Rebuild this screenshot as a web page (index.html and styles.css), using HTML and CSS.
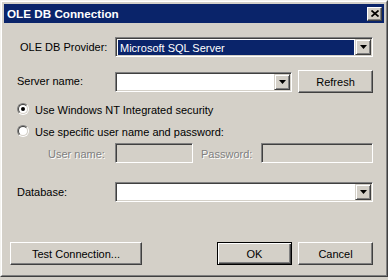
FILE: index.html
```html
<!doctype html>
<html lang="en">

<head>
    <meta charset="utf-8">
    <title>OLE DB Connection</title>
    <link rel="stylesheet" href="styles.css">
</head>

<body>
    <div class="window">
        <div class="frame">
            <div class="titlebar">
                <span class="title">OLE DB Connection</span>
                <button type="button" class="close-btn" aria-label="Close">
                    <svg width="8" height="7" viewBox="0 0 8 7"><path d="M0.5 0.5 L7.5 6.5 M7.5 0.5 L0.5 6.5" stroke="#000" stroke-width="1.7" fill="none"/></svg>
                </button>
            </div>

            <div class="content">
                <div class="row row-provider">
                    <span class="label label-provider">OLE DB Provider:</span>
                    <div class="combo combo-full">
                        <span class="combo-value selected">Microsoft SQL Server</span>
                        <span class="drop-btn"><svg width="7" height="4" viewBox="0 0 7 4"><polygon points="0,0 7,0 3.5,4" fill="#000"/></svg></span>
                    </div>
                </div>

                <div class="row row-server">
                    <span class="label">Server name:</span>
                    <div class="combo combo-server">
                        <span class="combo-value"></span>
                        <span class="drop-btn"><svg width="7" height="4" viewBox="0 0 7 4"><polygon points="0,0 7,0 3.5,4" fill="#000"/></svg></span>
                    </div>
                    <button type="button" class="btn btn-refresh">Refresh</button>
                </div>

                <div class="row row-radio row-radio-first">
                    <span class="radio"><span class="radio-inner checked"></span></span>
                    <span class="radio-text">Use Windows NT Integrated security</span>
                </div>

                <div class="row row-radio row-radio-second">
                    <span class="radio"><span class="radio-inner"></span></span>
                    <span class="radio-text">Use specific user name and password:</span>
                </div>

                <div class="row row-user">
                    <span class="label label-user disabled">User name:</span>
                    <div class="edit edit-user"></div>
                    <span class="label-password disabled">Password:</span>
                    <div class="edit edit-password"></div>
                </div>

                <div class="row row-database">
                    <span class="label">Database:</span>
                    <div class="combo combo-full">
                        <span class="combo-value"></span>
                        <span class="drop-btn"><svg width="7" height="4" viewBox="0 0 7 4"><polygon points="0,0 7,0 3.5,4" fill="#000"/></svg></span>
                    </div>
                </div>

                <div class="row row-buttons">
                    <button type="button" class="btn btn-test">Test Connection...</button>
                    <button type="button" class="btn btn-default btn-ok">OK</button>
                    <button type="button" class="btn btn-cancel">Cancel</button>
                </div>
            </div>
        </div>
    </div>
</body>

</html>
```

FILE: styles.css
```css
/* Classic Windows dialog look */
html, body {
    margin: 0;
    padding: 0;
}

body {
    background: #d4d0c8;
    font-family: "Liberation Sans", Arial, sans-serif;
    font-size: 11px;
    color: #000000;
}

.window {
    width: 388px;
    height: 277px;
    box-sizing: border-box;
    border: 1px solid;
    border-color: #f4f3ef #404040 #404040 #f4f3ef;
    background: #d4d0c8;
}

.frame {
    height: 100%;
    box-sizing: border-box;
    border: 1px solid;
    border-color: #ffffff #808080 #808080 #ffffff;
    padding: 2px;
    display: flex;
    flex-direction: column;
}

.titlebar {
    height: 19px;
    flex: none;
    background: #0a246a;
    display: flex;
    align-items: center;
    justify-content: space-between;
    padding-left: 3px;
}

.title {
    color: #ffffff;
    font-weight: bold;
    font-size: 11.7px;
}

.close-btn {
    width: 15px;
    height: 14px;
    margin-right: 2px;
    padding: 0;
    box-sizing: border-box;
    background: #d4d0c8;
    border: 1px solid;
    border-color: #ffffff #404040 #404040 #ffffff;
    box-shadow: inset -1px -1px #808080;
    display: flex;
    align-items: center;
    justify-content: center;
}

.content {
    flex: 1;
    padding: 0 11px 0 6px;
    display: flex;
    flex-direction: column;
}

.row {
    display: flex;
    align-items: center;
    flex: none;
}

.row-provider { margin-top: 14px; height: 20px; }
.row-server { margin-top: 13px; height: 23px; align-items: flex-start; }
.row-radio { height: 12px; }
.row-radio-first { margin-top: 10px; }
.row-radio-second { margin-top: 10px; }
.row-user { margin-top: 6px; height: 20px; }
.row-database { margin-top: 19px; height: 20px; }
.row-buttons { margin-top: 40px; height: 23px; }

.label {
    width: 105px;
    flex: none;
    box-sizing: border-box;
    padding-left: 7px;
    white-space: nowrap;
}

.label-provider { padding-left: 10px; }

.row-server .label { align-self: center; padding-bottom: 1px; }

.label-user { padding-left: 38px; padding-top: 2px; }

.label-password {
    width: 68px;
    flex: none;
    box-sizing: border-box;
    padding-left: 8px;
    padding-top: 2px;
    white-space: nowrap;
}

.disabled {
    color: #808080;
    text-shadow: 1px 1px 0 #ffffff;
}

/* sunken field */
.combo, .edit {
    height: 20px;
    box-sizing: border-box;
    border: 1px solid;
    border-color: #808080 #ffffff #ffffff #808080;
    box-shadow: inset 1px 1px #404040, inset -1px -1px #d4d0c8;
    background: #ffffff;
}

.combo {
    display: flex;
    align-items: stretch;
    padding: 1px;
}

.combo-full { flex: 1; }
.combo-server { width: 177px; flex: none; margin-top: 2px; }

.combo-value {
    flex: 1;
    margin: 1px 1px 0 1px;
    padding-left: 2px;
    display: flex;
    align-items: center;
    white-space: nowrap;
}

.combo-value.selected {
    background: #0a246a;
    color: #ffffff;
}

.drop-btn {
    width: 16px;
    flex: none;
    box-sizing: border-box;
    background: #d4d0c8;
    border: 1px solid;
    border-color: #d4d0c8 #404040 #404040 #d4d0c8;
    box-shadow: inset 1px 1px #ffffff, inset -1px -1px #808080;
    display: flex;
    align-items: center;
    justify-content: center;
}

.edit { background: #d4d0c8; }
.edit-user { width: 78px; flex: none; }
.edit-password { flex: 1; }

/* radio buttons */
.radio {
    width: 12px;
    height: 12px;
    box-sizing: border-box;
    margin-left: 7px;
    border-radius: 50%;
    border: 1px solid;
    border-color: #808080 #ffffff #ffffff #808080;
    flex: none;
}

.radio-inner {
    display: flex;
    align-items: center;
    justify-content: center;
    width: 100%;
    height: 100%;
    box-sizing: border-box;
    border-radius: 50%;
    border: 1px solid;
    border-color: #404040 #d4d0c8 #d4d0c8 #404040;
    background: #ffffff;
}

.radio-inner.checked::after {
    content: "";
    width: 4px;
    height: 4px;
    border-radius: 50%;
    background: #000000;
}

.radio-text {
    margin-left: 6px;
    line-height: 12px;
    padding-top: 2px;
    white-space: nowrap;
}

/* raised buttons */
.btn {
    height: 23px;
    box-sizing: border-box;
    padding: 0;
    font-family: inherit;
    font-size: 11px;
    color: #000000;
    background: #d4d0c8;
    border: 1px solid;
    border-color: #ffffff #404040 #404040 #ffffff;
    box-shadow: inset -1px -1px #808080;
    flex: none;
}

.btn-refresh { width: 75px; margin-left: 6px; }
.btn-test { width: 132px; }
.btn-ok { width: 75px; margin-left: auto; }
.btn-cancel { width: 75px; margin-left: 6px; }

.btn-default {
    border: 1px solid #000000;
    box-shadow: inset 1px 1px #ffffff, inset -1px -1px #404040, inset -2px -2px #808080;
}
```
